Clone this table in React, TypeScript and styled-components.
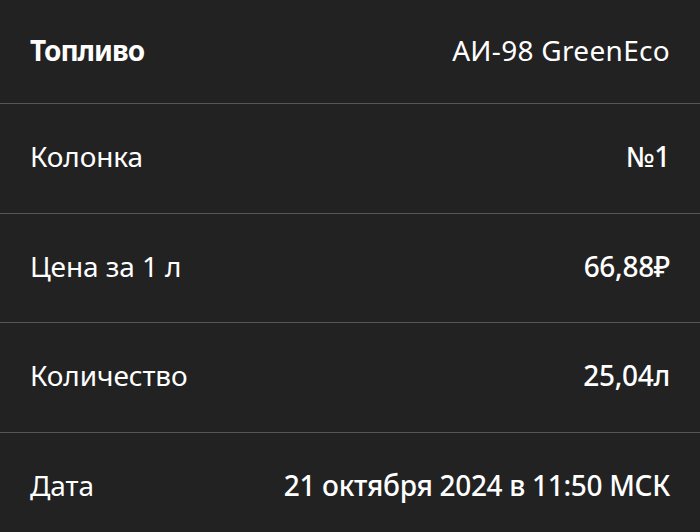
import styled, { createGlobalStyle } from "styled-components";

const GlobalStyle = createGlobalStyle`
  html, body {
    margin: 0;
    padding: 0;
    background: #222222;
  }
  body {
    font-family: "Noto Sans", "Open Sans", sans-serif;
    -webkit-font-smoothing: antialiased;
  }
`;

type Item = {
  label: string;
  value: string;
  strongLabel?: boolean;
  strongValue?: boolean;
};

const items: Item[] = [
  { label: "Топливо", value: "АИ-98 GreenEco", strongLabel: true },
  { label: "Колонка", value: "№1", strongValue: true },
  { label: "Цена за 1 л", value: "66,88₽", strongValue: true },
  { label: "Количество", value: "25,04л", strongValue: true },
  { label: "Дата", value: "21 октября 2024 в 11:50 МСК", strongValue: true },
];

export default function App() {
  return (
    <>
      <GlobalStyle />
      <Page>
        <List>
          {items.map((item, i) => (
            <Row key={item.label} first={i === 0}>
              <Label strong={item.strongLabel}>{item.label}</Label>
              <Value strong={item.strongValue}>{item.value}</Value>
            </Row>
          ))}
        </List>
      </Page>
    </>
  );
}

const Page = styled.div`
  width: 700px;
  height: 532px;
  overflow: hidden;
  background: #222222;
  color: #ffffff;
`;

const List = styled.div`
  display: flex;
  flex-direction: column;
`;

const Row = styled.div<{ first?: boolean }>`
  display: flex;
  flex-direction: row;
  justify-content: space-between;
  align-items: center;
  box-sizing: border-box;
  height: ${(props) => (props.first ? "104px" : "109.6px")};
  padding: 0 30px 4px;
  border-bottom: 1px solid #555555;
  flex-shrink: 0;
`;

const Label = styled.div<{ strong?: boolean }>`
  font-size: 28px;
  line-height: 34px;
  font-weight: ${(props) => (props.strong ? 700 : 400)};
  letter-spacing: ${(props) => (props.strong ? "-1px" : "-0.1px")};
`;

const Value = styled.div<{ strong?: boolean }>`
  font-size: 28px;
  line-height: 34px;
  font-weight: ${(props) => (props.strong ? 500 : 400)};
  letter-spacing: ${(props) => (props.strong ? "-0.3px" : "0.3px")};
`;
